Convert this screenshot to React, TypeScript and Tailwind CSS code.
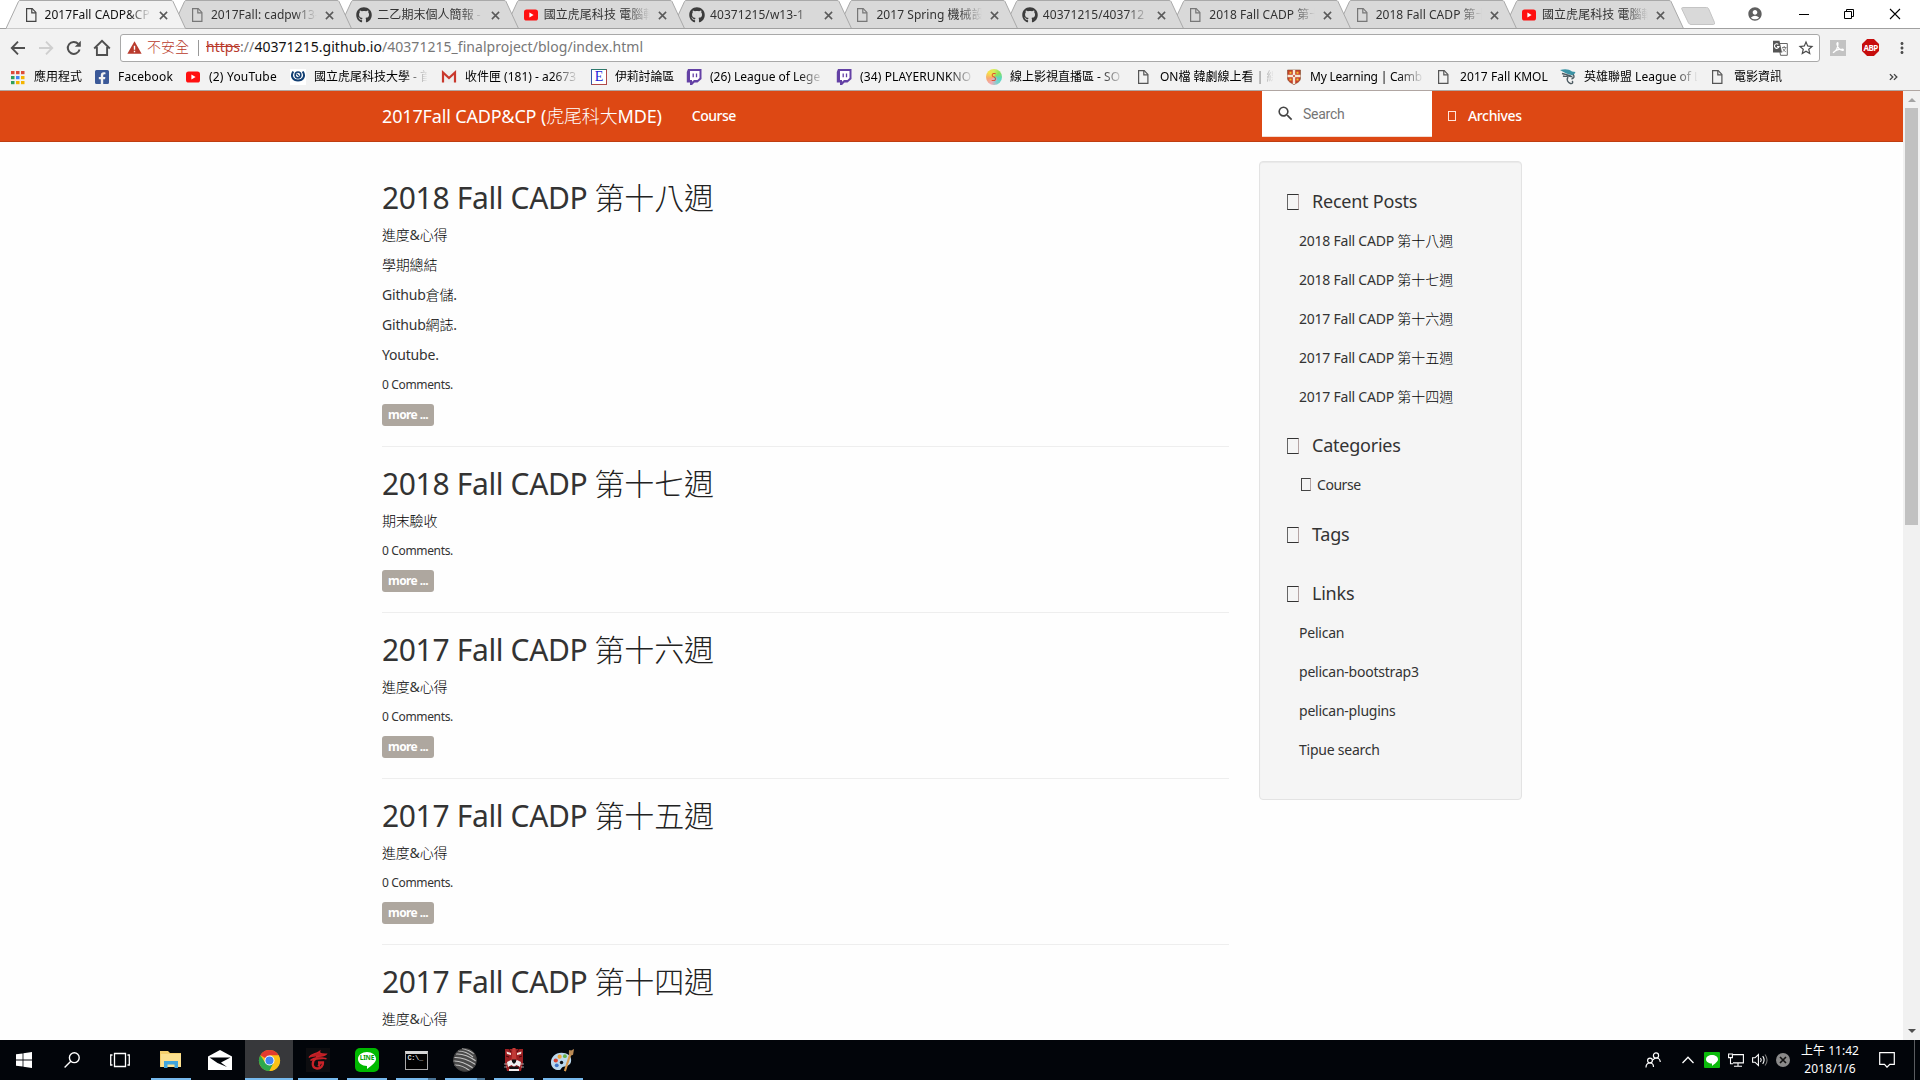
import type { ReactNode } from "react";
import { FaFacebookSquare, FaGithub } from "react-icons/fa";
import { MdStarBorder, MdSearch, MdMoreVert, MdAccountCircle } from "react-icons/md";

const UI = "font-['Noto_Sans','Noto_Sans_CJK_TC',sans-serif]";

/* ---------- shared ---------- */

/** Draws Han characters in a lighter weight than the Latin text around them. */
function Mixed({ text, han = "font-light" }: { text: string; han?: string }) {
  return (
    <span className="whitespace-pre">
      {text.split(/([\u4e00-\u9fff]+)/).map((part, i) =>
        i % 2 ? (
          <span key={i} className={han}>
            {part}
          </span>
        ) : (
          part
        ),
      )}
    </span>
  );
}

function PageIcon({ className = "text-[#555]" }: { className?: string }) {
  return (
    <svg viewBox="0 0 16 16" className={`size-4 shrink-0 ${className}`} fill="none" stroke="currentColor" strokeWidth="1.2">
      <path d="M2.6 1.6h5.6l3.7 3.8v9H2.6z" />
      <path d="M7.8 1.8v4h4" />
    </svg>
  );
}

function YouTubeIcon() {
  return (
    <svg viewBox="0 0 16 16" className="size-4 shrink-0">
      <rect x="1" y="2.5" width="14" height="11" rx="2.6" fill="#ff1010" />
      <path d="M6.4 5.4v5.2L10.6 8z" fill="#fff" />
    </svg>
  );
}

/* ---------- browser tabs ---------- */

type Tab = { title: string; icon: "page" | "github" | "youtube"; z: string; active?: boolean };

const tabs: Tab[] = [
  { title: "2017Fall CADP&CP", icon: "page", z: "z-20", active: true },
  { title: "2017Fall: cadpw13-", icon: "page", z: "z-[9]" },
  { title: "二乙期末個人簡報 -", icon: "github", z: "z-[8]" },
  { title: "國立虎尾科技 電腦輔", icon: "youtube", z: "z-[7]" },
  { title: "40371215/w13-1", icon: "github", z: "z-[6]" },
  { title: "2017 Spring 機械設", icon: "page", z: "z-[5]" },
  { title: "40371215/403712", icon: "github", z: "z-[4]" },
  { title: "2018 Fall CADP 第十", icon: "page", z: "z-[3]" },
  { title: "2018 Fall CADP 第十", icon: "page", z: "z-[2]" },
  { title: "國立虎尾科技 電腦輔", icon: "youtube", z: "z-[1]" },
];

function TabItem({ tab }: { tab: Tab }) {
  return (
    <div className={`relative flex h-[29px] w-[166.4px] shrink-0 items-center pt-[1px] pl-[17.500px] ${tab.z}`}>
      <svg viewBox="0 0 180 29" className="absolute top-0 left-0 h-[29px] w-[180px]">
        <path
          d="M0 28.5L12.5 1.5Q13 .5 14 .5H165Q166.5 .5 167 1.5L179.5 28.5"
          fill={tab.active ? "#f2f2f2" : "#d9d9d9"}
          stroke="#a9a9a9"
        />
        {!tab.active && <path d="M0 28.5H180" stroke="#a0a0a0" />}
      </svg>
      <div className="relative flex items-center">
        {tab.icon === "page" && <PageIcon className={tab.active ? "text-[#444]" : "text-[#777]"} />}
        {tab.icon === "github" && <FaGithub className="size-4 shrink-0 text-[#3c3c3c]" />}
        {tab.icon === "youtube" && <YouTubeIcon />}
        <div
          className={`ml-[5px] w-[107px] overflow-hidden text-xs tracking-[0.050px] whitespace-nowrap [mask-image:linear-gradient(to_right,black_78%,transparent_99%)] ${
            tab.active ? "text-[#111]" : "text-[#333]"
          }`}
        >
          {tab.title}
        </div>
        <svg viewBox="0 0 10 10" className="ml-[7px] size-[9px]" stroke="#5a5a5a" strokeWidth="1.7">
          <path d="M1 1l8 8M9 1L1 9" />
        </svg>
      </div>
    </div>
  );
}

function TabStrip() {
  return (
    <div className="flex h-[29px] shrink-0 bg-white shadow-[inset_0_-1px_0_#a0a0a0]">
      <div className="flex w-[1676px] shrink-0 pl-[6px]">
        {tabs.map((t, i) => (
          <TabItem key={i} tab={t} />
        ))}
      </div>
      <svg viewBox="0 0 36 18" className="mt-[7px] ml-[5px] h-[18px] w-9 shrink-0">
        <path d="M1.5 .5H25.5Q27 .5 27.5 1.5L33.5 15.5Q34 17.5 32.5 17.5H10Q8.500 17.500 7.500 16L.8 2Q.5 .5 1.500 .5z" fill="#d9d9d9" stroke="#c4c4c4" />
      </svg>
      <div className="flex h-[27px] flex-1 items-center text-black">
        <MdAccountCircle className="ml-[30px] size-4 text-[#5f5f5f]" />
        <svg viewBox="0 0 12 12" className="ml-[35px] size-3" fill="none" stroke="currentColor">
          <path d="M1 6.500h10" />
        </svg>
        <svg viewBox="0 0 12 12" className="ml-[33px] size-3" fill="none" stroke="currentColor">
          <path d="M1.500 3.500h7v7h-7zM3.500 3.500v-2h7v7h-2" />
        </svg>
        <svg viewBox="0 0 12 12" className="ml-[34px] size-3" fill="none" stroke="currentColor" strokeWidth="1.100">
          <path d="M1 1l10 10M11 1L1 11" />
        </svg>
      </div>
    </div>
  );
}

/* ---------- address bar ---------- */

function TranslateIcon() {
  return (
    <svg viewBox="0 0 16 16" className="mr-[9px] ml-auto size-4" fill="none">
      <path d="M6.500 3.500h8.800v11.800H8.500z" fill="#fff" stroke="#666" />
      <path d="M10 7.500h4.500M12.200 6v1.500M13.700 7.500c-.5 2-1.700 3.300-3.200 4.300M10.800 8.500c.6 1.500 1.700 2.600 3 3.300" stroke="#777" strokeWidth=".9" />
      <path d="M1 .8h6.500L10 12.500H1z" fill="#555" />
      <path d="M6.300 4.300A2.300 2.300 0 1 0 7 6.600H5" stroke="#fff" strokeWidth="1.100" />
    </svg>
  );
}

function AddressBar() {
  return (
    <div className="flex h-[37px] shrink-0 items-center bg-[#f2f2f2]">
      <svg viewBox="0 0 16 16" className="ml-[10px] size-4" fill="none" stroke="#4f4f4f" strokeWidth="1.900">
        <path d="M15 8H2M8 1.700L1.800 8 8 14.300" />
      </svg>
      <svg viewBox="0 0 16 16" className="ml-3 size-4" fill="none" stroke="#cfcfcf" strokeWidth="1.900">
        <path d="M1 8h13M8 1.700L14.200 8 8 14.300" />
      </svg>
      <svg viewBox="0 0 16 16" className="ml-3 size-4" fill="none" stroke="#4f4f4f" strokeWidth="2">
        <path d="M13.600 9.500A6 6 0 1 1 12.300 3.900" />
        <path d="M14.800 .8v6H8.800z" fill="#4f4f4f" stroke="none" />
      </svg>
      <svg viewBox="0 0 18 18" className="ml-[11px] size-[18px]" fill="none" stroke="#4f4f4f" strokeWidth="1.900">
        <path d="M1.200 9.500L9 1.900l7.800 7.600M3.900 8v8h10.200V8" />
      </svg>
      <div className="ml-[9px] flex h-7 w-[1700px] items-center rounded-[3px] border border-[#a9a9a9] bg-white pl-1.5 text-sm whitespace-nowrap">
        <svg viewBox="0 0 16 14" className="h-[13px] w-[15px]">
          <path d="M8 .3L15.700 13.700H.3z" fill="#b93a2c" />
          <path d="M8 5v4.300M8 10.500v1.600" stroke="#fff" strokeWidth="1.500" />
        </svg>
        <div className="flex items-center pb-[2px]">
          <span className="ml-[5px] font-light text-[#b93a2c]">不安全</span>
          <span className="mt-[2px] ml-[9px] h-4 w-px bg-[#999]" />
          <span className="ml-[7px] text-[#b93a2c] line-through">https</span>
          <span className="tracking-[0.040px] text-[#777]">
            ://<span className="text-[#111]">40371215.github.io</span>/40371215_finalproject/blog/index.html
          </span>
        </div>
        <TranslateIcon />
        <MdStarBorder className="mr-[4px] size-[18px] text-[#4a4a4a]" />
      </div>
      <div className="ml-[10px] flex size-4 items-center justify-center bg-[#c3c3c3]">
        <svg viewBox="0 0 16 16" className="size-4" fill="none" stroke="#fff" strokeWidth="1.200">
          <path d="M3 12.800C6 11 8 7 8 3.500c0-1.500-1.400-1-1 .8.600 3 2.500 5.500 5.500 6 1.500.2 1-1.200-.5-1.100C9 9.300 5 10.500 3 12.800z" />
        </svg>
      </div>
      <div className="ml-4 flex size-[17px] items-center justify-center bg-[#c70d0d] text-[8px] leading-none font-bold tracking-[-0.600px] text-white [clip-path:polygon(30%_0,70%_0,100%_30%,100%_70%,70%_100%,30%_100%,0_70%,0_30%)]">
        ABP
      </div>
      <MdMoreVert className="ml-[14px] size-[18px] text-[#4f4f4f]" />
    </div>
  );
}

/* ---------- bookmarks ---------- */

function AppsIcon() {
  const colors = ["#dd4b39", "#dd4b39", "#dd4b39", "#2f9e5b", "#4285f4", "#f4b400", "#2f9e5b", "#f4b400", "#f4b400"];
  return (
    <svg viewBox="0 0 16 16" className="size-4">
      {colors.map((c, i) => (
        <rect key={i} x={1 + (i % 3) * 5} y={2 + Math.floor(i / 3) * 5} width="3.500" height="3.200" fill={c} />
      ))}
    </svg>
  );
}

function UniversityIcon() {
  return (
    <svg viewBox="0 0 16 16" className="size-4">
      <rect width="16" height="16" fill="#fff" />
      <path d="M3.300 2.500C.2 7 3 11.500 8 11.500s7.800-4.500 4.700-9" fill="none" stroke="#123f73" strokeWidth="2" />
      <circle cx="8" cy="6" r="2.900" fill="none" stroke="#123f73" strokeWidth="1.500" />
      <path d="M6.500 4.600l3 3" stroke="#123f73" strokeWidth="1.300" />
    </svg>
  );
}

function GmailIcon() {
  return (
    <svg viewBox="0 0 16 16" className="size-4">
      <rect x="1" y="2" width="14" height="11.500" fill="#eee" />
      <path d="M2 13.500V3.500l6 5.500 6-5.500v10" fill="none" stroke="#c9382c" strokeWidth="2.200" />
    </svg>
  );
}

function ForumIcon() {
  return (
    <div className="flex size-4 items-center justify-center border border-t-[#2d7a6b] border-r-[#b04848] border-b-[#b04848] border-l-[#3558a8] bg-white font-['Liberation_Serif',serif] text-sm leading-none text-[#2222d8]">
      E
    </div>
  );
}

function TwitchIcon() {
  return (
    <svg viewBox="0 0 16 16" className="size-4">
      <path d="M2 0h13.500v10l-4 3.500H8.500L6 16H4v-2.500H.8V3z" fill="#6441a5" />
      <path d="M4 2h9.500v7l-2 2H8l-2 1.800V11H4z" fill="#fff" />
      <path d="M7.200 4.500v3.800M10.500 4.500v3.800" stroke="#6441a5" strokeWidth="1.300" />
    </svg>
  );
}

function StreamIcon() {
  return (
    <div className="flex size-4 items-center justify-center rounded-full bg-[conic-gradient(#d8ec5a,#8ee05a,#5ad8c0,#80d0d0,#f0a8b8,#f8a870,#f6e04a,#d8ec5a)] text-[10px] leading-none text-[#e04a2a]">
      S
    </div>
  );
}

function ShieldIcon() {
  return (
    <svg viewBox="0 0 16 16" className="size-4">
      <path d="M1.500 1h13v8c0 3.500-3.500 5-6.500 6.500C5 14 1.500 12.500 1.500 9z" fill="#c7402a" stroke="#7a4a2c" strokeWidth=".6" />
      <path d="M8 1v14M1.500 7h13" stroke="#f5ead8" strokeWidth="2.400" />
      <path d="M3.500 3.800h2M10.500 3.800h2M3.500 10.500h2M10.500 10.500h2" stroke="#f2c230" strokeWidth="2" />
      <path d="M7 7h2" stroke="#c7402a" strokeWidth="1.600" />
    </svg>
  );
}

function DragonIcon() {
  return (
    <svg viewBox="0 0 16 16" className="size-4" fill="none">
      <path d="M0 1C5-.5 9 0 12 2.500L15.500 3l-2 3.500-4-1C6 4.500 4 3 0 1z" fill="#3b93a5" />
      <path d="M2 4.500c4 1.500 8 1 9.500 3-4-1-6 .5-8.500-.5M13 5.500c2 2 1 4-1.500 4.500M8 8c-2 3 0 5.500 2.500 6.500 2 .5 3-1.500 1.500-2.500" stroke="#4d5b62" strokeWidth="1.400" />
    </svg>
  );
}

const bookmarks: { label: string; icon: ReactNode; w: string }[] = [
  { label: "應用程式", icon: <AppsIcon />, w: "w-[84px]" },
  { label: "Facebook", icon: <FaFacebookSquare className="size-4 text-[#3b5998]" />, w: "w-[91px] tracking-[0.150px]" },
  { label: "(2) YouTube", icon: <YouTubeIcon />, w: "w-[105px] tracking-[0.200px]" },
  { label: "國立虎尾科技大學 - 首", icon: <UniversityIcon />, w: "w-[151px]" },
  { label: "收件匣 (181) - a2673", icon: <GmailIcon />, w: "w-[150px]" },
  { label: "伊莉討論區", icon: <ForumIcon />, w: "w-[95px] tracking-[-0.200px]" },
  { label: "(26) League of Lege", icon: <TwitchIcon />, w: "w-[150px]" },
  { label: "(34) PLAYERUNKNO", icon: <TwitchIcon />, w: "w-[150px] tracking-[0.120px]" },
  { label: "線上影視直播區 - SO", icon: <StreamIcon />, w: "w-[150px]" },
  { label: "ON檔 韓劇線上看 | 線", icon: <PageIcon />, w: "w-[150px]" },
  { label: "My Learning | Camb", icon: <ShieldIcon />, w: "w-[150px] tracking-[-0.220px]" },
  { label: "2017 Fall KMOL", icon: <PageIcon />, w: "w-[124px] tracking-[0.080px]" },
  { label: "英雄聯盟 League of L", icon: <DragonIcon />, w: "w-[150px]" },
  { label: "電影資訊", icon: <PageIcon />, w: "w-[80px]" },
];

function Bookmarks() {
  return (
    <div className="flex h-[25px] shrink-0 items-center border-b border-[#b0a6a2] bg-[#f2f2f2] pb-[3px] pl-[10px] text-xs whitespace-nowrap text-black">
      {bookmarks.map((b, i) => (
        <div key={i} className={`flex shrink-0 items-center gap-2 ${b.w}`}>
          <div className="size-4 shrink-0">{b.icon}</div>
          <div className="max-w-[113px] overflow-hidden [mask-image:linear-gradient(to_right,black_0,black_88px,transparent_114px)]">
            {b.label}
          </div>
        </div>
      ))}
      <svg viewBox="0 0 10 8" className="mr-[22px] ml-auto h-2 w-[9px]" fill="none" stroke="#444" strokeWidth="1.500">
        <path d="M1 .8L4.200 4 1 7.200M5.500 .8L8.700 4 5.500 7.200" />
      </svg>
    </div>
  );
}

/* ---------- blog page ---------- */

function Navbar() {
  return (
    <header className="h-[51px] shrink-0 border-b border-[#bf3e11] bg-[#dd4814] text-white">
      <div className="ml-[382px] flex h-[50px] w-[1140px]">
        <div className="mt-[2px] flex h-[46px] items-center text-lg tracking-[-0.150px] whitespace-nowrap">
          <Mixed text="2017Fall CADP&CP (虎尾科大MDE)" />
        </div>
        <div className="mt-px ml-[30px] flex h-[48px] items-center text-sm font-medium tracking-[-0.500px]">Course</div>
        <div className="ml-auto flex h-[46px] w-[170px] items-center border-b border-[#f3dcd2] bg-white pl-[14px]">
          <MdSearch className="size-[19px] text-[#444]" />
          <span className="ml-[8px] font-['Roboto',sans-serif] text-sm tracking-[-0.250px] text-[#757575]">Search</span>
        </div>
        <div className="ml-[16px] flex h-[50px] w-[74px] items-center text-sm font-medium tracking-[-0.350px]">
          <span className="mr-[12px] h-[10px] w-2 border border-[#ffe4da]" />
          Archives
        </div>
      </div>
    </header>
  );
}

const posts: { title: string; week: string; lines: string[] }[] = [
  { title: "2018 Fall CADP", week: "第十八週", lines: ["進度&心得", "學期總結", "Github倉儲.", "Github網誌.", "Youtube."] },
  { title: "2018 Fall CADP", week: "第十七週", lines: ["期末驗收"] },
  { title: "2017 Fall CADP", week: "第十六週", lines: ["進度&心得"] },
  { title: "2017 Fall CADP", week: "第十五週", lines: ["進度&心得"] },
  { title: "2017 Fall CADP", week: "第十四週", lines: ["進度&心得"] },
];

function Post({ title, week, lines }: { title: string; week: string; lines: string[] }) {
  return (
    <article className="mb-5 border-b border-[#eee] pb-5 tracking-[-0.200px] text-[#333]">
      <h2 className="mb-[10px] flex h-[33px] items-center text-[30px] leading-[31px] tracking-[-0.350px] whitespace-nowrap">
        <span className="pb-px">{title}</span>
        <span className="ml-[7px] font-light tracking-[-0.100px] text-[#222]">{week}</span>
      </h2>
      {lines.map((l) => (
        <p key={l} className="mb-[10px] flex h-5 items-center pt-px text-sm">
          <Mixed text={l} han="font-light text-black" />
        </p>
      ))}
      <p className="mb-[10px] flex h-5 items-center pt-[2px] text-xs tracking-[-0.350px]">0 Comments.</p>
      <span className="flex h-[22px] w-[52px] items-center justify-center rounded-[3px] bg-[#aea79f] text-xs font-bold tracking-[-0.600px] text-white">
        more ...
      </span>
    </article>
  );
}

function SideHeading({ label, space }: { label: string; space: string }) {
  return (
    <h4 className={`flex h-5 items-center text-lg leading-5 tracking-[-0.230px] ${space}`}>
      <span className="mt-[2px] mr-[13px] h-4 w-3 border border-y-[#333] border-r-[#b5a5a5] border-l-[#666]" />
      <span className="pb-px">{label}</span>
    </h4>
  );
}

function SideItems({ items }: { items: string[] }) {
  return (
    <ul className="ml-[12px] flex flex-col text-sm tracking-[-0.230px]">
      {items.map((t) => (
        <li key={t} className="flex h-[39px] items-center pb-[2px] whitespace-nowrap">
          <Mixed text={t} han="font-light tracking-[0px] text-black" />
        </li>
      ))}
    </ul>
  );
}

function Sidebar() {
  return (
    <aside className="mt-[19px] ml-[29.500px] h-[639px] w-[263px] shrink-0 rounded border border-[#e3e3e3] bg-[#f5f5f5] pt-[29px] pl-[27.500px] text-[#333] shadow-[inset_0_1px_1px_rgba(0,0,0,0.05)]">
      <SideHeading label="Recent Posts" space="mb-[11px]" />
      <SideItems items={posts.map((p) => `${p.title} ${p.week}`)} />
      <SideHeading label="Categories" space="mt-[18px] mb-[10px]" />
      <div className="ml-[14px] flex h-[39px] items-center text-sm tracking-[-0.450px]">
        <span className="mr-[6px] h-[13px] w-[10px] border border-[#444] border-r-[#b5a5a5]" />
        Course
      </div>
      <SideHeading label="Tags" space="mt-[20px]" />
      <SideHeading label="Links" space="mt-[39px] mb-[11px]" />
      <SideItems items={["Pelican", "pelican-bootstrap3", "pelican-plugins", "Tipue search"]} />
    </aside>
  );
}

function Scrollbar() {
  return (
    <div className="flex w-[17px] shrink-0 flex-col items-center bg-[#f1f1f1] pt-[7px]">
      <svg viewBox="0 0 8 4" className="h-1 w-2">
        <path d="M0 4L4 0l4 4z" fill="#a3a3a3" />
      </svg>
      <div className="mt-[6px] h-[417px] w-[13px] bg-[#c1c1c1]" />
      <svg viewBox="0 0 8 4" className="mt-auto mb-[7px] h-1 w-2">
        <path d="M0 0l4 4 4-4z" fill="#505050" />
      </svg>
    </div>
  );
}

/* ---------- taskbar ---------- */

function ExplorerIcon() {
  return (
    <svg viewBox="0 0 22 20" className="h-[20px] w-[22px]">
      <path d="M0 1h8l2 2h11v14H0z" fill="#f4cf6d" />
      <path d="M1 4h20v13H1z" fill="#fbe08f" />
      <path d="M4 18v-7h14v7h-3.500v-3.500h-7V18z" fill="#40a5dd" />
    </svg>
  );
}

function ChromeIcon() {
  return (
    <svg viewBox="0 0 24 24" className="size-[23px]">
      <circle cx="12" cy="12" r="11" fill="#fbc116" />
      <path d="M12 12L2.470 6.500A11 11 0 0 1 21.530 6.500z" fill="#e33b2e" />
      <path d="M2.470 6.500A11 11 0 0 0 12 23L16.300 14.500 12 12 7.700 14.500z" fill="#2da94f" />
      <path d="M21.530 6.500H12V12l4.300 2.500L12 23A11 11 0 0 0 21.530 6.500z" fill="#fbc116" />
      <circle cx="12" cy="12" r="5.200" fill="#fff" />
      <circle cx="12" cy="12" r="4.200" fill="#4285f4" />
    </svg>
  );
}

function GarenaIcon() {
  return (
    <svg viewBox="0 0 24 24" className="size-6">
      <rect width="24" height="24" fill="#0d0d10" />
      <path
        d="M3 9.500C5 6 9 6.500 13.500 3.500 13 6 16 6 20 6.200 18 8.500 13 8 10 8.500M4.500 12.500C8 9 15 9.500 20.500 10.800"
        fill="#b81f24"
        stroke="#c92228"
        strokeWidth="1.500"
      />
      <path d="M10 10.500c-4 2-5 9.500 1 10 4 .2 6.200-3 6-6h-5M14 15l-1.500 3.500" fill="none" stroke="#c92228" strokeWidth="2.300" />
    </svg>
  );
}

function LineIcon() {
  return (
    <div className="relative flex size-6 items-center justify-center rounded-[5px] bg-[#00b900]">
      <svg viewBox="0 0 24 24" className="absolute size-6">
        <path d="M12 4c5 0 9 3 9 7 0 3.500-4.500 6.500-9 10v-3c-5 0-9-3-9-7s4-7 9-7z" fill="#fff" />
      </svg>
      <span className="relative -mt-[3px] text-[6.500px] leading-none font-bold tracking-[-0.200px] text-[#00a000]">LINE</span>
    </div>
  );
}

function ConsoleIcon() {
  return (
    <div className="h-[19px] w-[23px] border border-[#a9a9a9] border-t-[3px] border-t-[#d5d5d5] bg-black pl-[2px] font-['Liberation_Mono',monospace] text-[7px] leading-[9px] font-bold tracking-[-0.400px] text-[#ddd]">
      C:\_
    </div>
  );
}

function SphereIcon() {
  return (
    <svg viewBox="0 0 24 24" className="size-6">
      <circle cx="12" cy="12" r="11.800" fill="#4a4a4a" />
      <g fill="none" stroke="#c4c4c4" strokeWidth="1.100">
        <path d="M5 3c5 0 10 1.500 15 6M3 6c6-.5 13 2 20 7M1 9.500c7-.5 14 2 21.500 7M.3 13c7-.5 13 2.500 19.700 7M1.500 17c5 0 10 1.500 15 5.500M9 .8c4 .3 8 2 12 5" />
      </g>
      <circle cx="12" cy="12" r="11.300" fill="none" stroke="#333" opacity=".6" />
    </svg>
  );
}

function MaskIcon() {
  return (
    <svg viewBox="0 0 20 24" className="h-[24px] w-5">
      <path d="M1 1h18v14l-2 8H3l-2-8z" fill="#9c1f22" />
      <path d="M8.500 0h3l1 12h-5z" fill="#c23a36" />
      <path d="M5 1l2 3M15 1l-2 3M2 8l3 1M18 8l-3 1" stroke="#4a0a0c" />
      <path d="M2.500 3.500L7 5v2L3 6zM17.500 3.500L13 5v2l4-1z" fill="#f5e6e0" />
      <path d="M3 14l4-2 3 3 3-3 4 2-1 5-3.500-2-2.500 2-2.500-2L4 19z" fill="#eee" />
      <path d="M8 11.500h4v2.500l-2 2-2-2zM5 18.500h10L14 22H6z" fill="#111" />
      <path d="M5 21h10v2H5z" fill="#f2eeee" />
      <path d="M0 16h4M16 16h4M0 19h3M17 19h3" stroke="#ddd" strokeWidth=".7" />
    </svg>
  );
}

function PaintIcon() {
  return (
    <svg viewBox="0 0 26 26" className="-ml-px size-[25px]">
      <path d="M12 5C5 5 1 10 1 15c0 5 4 8 8 8 3 0 2.500-3 5-3.500 3-.5 8-1 8-7C22 8 18 5 12 5z" fill="#bcd9ee" />
      <circle cx="6" cy="13" r="2.200" fill="#d8432f" />
      <circle cx="10" cy="9" r="2.200" fill="#f0a63a" />
      <circle cx="15.500" cy="8.500" r="2" fill="#67b346" />
      <circle cx="7" cy="18" r="2" fill="#3f76c9" />
      <circle cx="12" cy="15" r="1.800" fill="#0b1016" />
      <path d="M21.500 5L15.500 24" stroke="#d99a4e" strokeWidth="2.200" />
      <path d="M19.500 5.500L20 2l2 .5L25 1l-1 6-2.500 1z" fill="#b98a55" />
    </svg>
  );
}

const taskButtons: { icon: ReactNode; state?: "open" | "multi" | "focus" }[] = [
  {
    icon: (
      <svg viewBox="0 0 16 16" className="size-4" fill="#fff">
        <path d="M0 2.300l6.600-.9v6.200H0zM7.400 1.300L16 0v7.600H7.400zM0 8.400h6.600v6.200L0 13.700zM7.400 8.400H16V16l-8.600-1.300z" />
      </svg>
    ),
  },
  {
    icon: (
      <svg viewBox="0 0 16 16" className="mr-[2px] size-4" fill="none" stroke="#fff" strokeWidth="1.400">
        <circle cx="10.300" cy="5.700" r="4.900" />
        <path d="M6.800 9.300L.6 15.500" />
      </svg>
    ),
  },
  {
    icon: (
      <svg viewBox="0 0 20 16" className="mr-1 h-4 w-5" fill="none" stroke="#fff" strokeWidth="1.300">
        <path d="M4.500 1.500h11v13h-11zM2.500 3H.7v10h1.800M17.500 3h1.800v10h-1.800" />
      </svg>
    ),
  },
  { icon: <ExplorerIcon />, state: "open" },
  {
    icon: (
      <svg viewBox="0 0 24 20" className="h-5 w-6">
        <path d="M0 6.500L12 0l12 6.500V20H0z" fill="#fff" />
        <path d="M1.500 7.500h21L13 12.500l6 4.500-9.500-4z" fill="#02050a" />
      </svg>
    ),
  },
  { icon: <ChromeIcon />, state: "focus" },
  { icon: <GarenaIcon />, state: "open" },
  { icon: <LineIcon />, state: "open" },
  { icon: <ConsoleIcon />, state: "multi" },
  { icon: <SphereIcon />, state: "multi" },
  { icon: <MaskIcon />, state: "open" },
  { icon: <PaintIcon />, state: "open" },
];

function TaskButton({ icon, state }: { icon: ReactNode; state?: string }) {
  return (
    <div className={`mr-px flex h-10 w-12 flex-col items-center ${state === "focus" ? "bg-[#37383b]" : ""}`}>
      <div className="flex h-[38px] items-center pt-[2px]">{icon}</div>
      {state === "focus" && <div className="h-[2px] w-12 bg-[#76b9ed]" />}
      {state === "open" && <div className="h-[2px] w-10 bg-[#76b9ed]" />}
      {state === "multi" && (
        <div className="flex h-[2px] w-10 bg-[#4a7496]">
          <div className="mr-px w-8 bg-[#76b9ed]" />
        </div>
      )}
    </div>
  );
}

function Tray() {
  return (
    <div className="ml-auto flex h-10 items-center text-white">
      <svg viewBox="0 0 16 16" className="size-4" fill="none" stroke="currentColor" strokeWidth="1.200">
        <circle cx="11" cy="3.500" r="2.600" />
        <circle cx="5" cy="8.500" r="2.400" />
        <path d="M1 15.500c0-3 1.500-4.500 4-4.500s3.500 1.500 3.500 4M8 8c1-1.800 2-2 3.500-2 2.300 0 3.500 1.500 3.800 4" />
      </svg>
      <svg viewBox="0 0 12 8" className="ml-[21px] h-2 w-3" fill="none" stroke="currentColor" strokeWidth="1.300">
        <path d="M.5 7L6 1.300 11.500 7" />
      </svg>
      <svg viewBox="0 0 16 16" className="ml-[10px] size-4">
        <rect width="16" height="16" rx="1" fill="#0bb90b" />
        <path d="M8 3c3.300 0 6 1.800 6 4.300S11 11.500 8 14v-2.400C4.700 11.600 2 9.800 2 7.300S4.700 3 8 3z" fill="#fff" />
      </svg>
      <svg viewBox="0 0 16 14" className="ml-2 h-[14px] w-4" fill="none" stroke="currentColor" strokeWidth="1.100">
        <path d="M5 1.600h10.400v8.300H5M10 10v3M6 13.200h8M.6 1h3.800v3.600H.6zM2.500 4.600v6.200H5" />
      </svg>
      <svg viewBox="0 0 16 14" className="ml-2 h-[14px] w-4" fill="none" stroke="currentColor" strokeWidth="1.100">
        <path d="M.6 4.800h2.400L6.400 1.500v11L3 9.200H.6zM8.500 5c.9 1.200.9 2.800 0 4M10.700 3.200c1.700 2.300 1.700 5.300 0 7.600" />
        <path d="M13 1.500c2.500 3.300 2.500 7.700 0 11" stroke="#777" />
      </svg>
      <svg viewBox="0 0 14 14" className="ml-2 size-[14px]">
        <circle cx="7" cy="7" r="7" fill="#8a8a8a" />
        <path d="M4 4l6 6M10 4l-6 6" stroke="#111" strokeWidth="1.600" />
      </svg>
      <div className="ml-[10px] flex w-[60px] flex-col items-center text-xs leading-[18px] whitespace-nowrap">
        <span>上午 11:42</span>
        <span className="tracking-[0.200px]">2018/1/6</span>
      </div>
      <svg viewBox="0 0 16 16" className="ml-[19px] size-4" fill="none" stroke="currentColor" strokeWidth="1.200">
        <path d="M.7 .7h14.600v11.600h-4.500L8 15.200l-2.500-2.900H.7z" />
      </svg>
      <div className="mr-[5px] ml-[19px] h-10 w-px bg-[#5a5c60]" />
    </div>
  );
}

export default function App() {
  return (
    <div className={`flex h-[1080px] w-[1920px] flex-col overflow-hidden bg-white ${UI}`}>
      <TabStrip />
      <AddressBar />
      <Bookmarks />
      <div className="flex min-h-0 flex-1 bg-[#fefefe]">
        <div className="flex min-w-0 flex-1 flex-col overflow-hidden">
          <Navbar />
          <div className="flex min-h-0 flex-1">
            <main className="ml-[382px] w-[847px] shrink-0 pt-[39px]">
              {posts.map((p) => (
                <Post key={p.week} {...p} />
              ))}
            </main>
            <Sidebar />
          </div>
        </div>
        <Scrollbar />
      </div>
      <footer className="relative z-10 flex h-10 shrink-0 bg-[#02050a]">
        {taskButtons.map((b, i) => (
          <TaskButton key={i} {...b} />
        ))}
        <Tray />
      </footer>
    </div>
  );
}
